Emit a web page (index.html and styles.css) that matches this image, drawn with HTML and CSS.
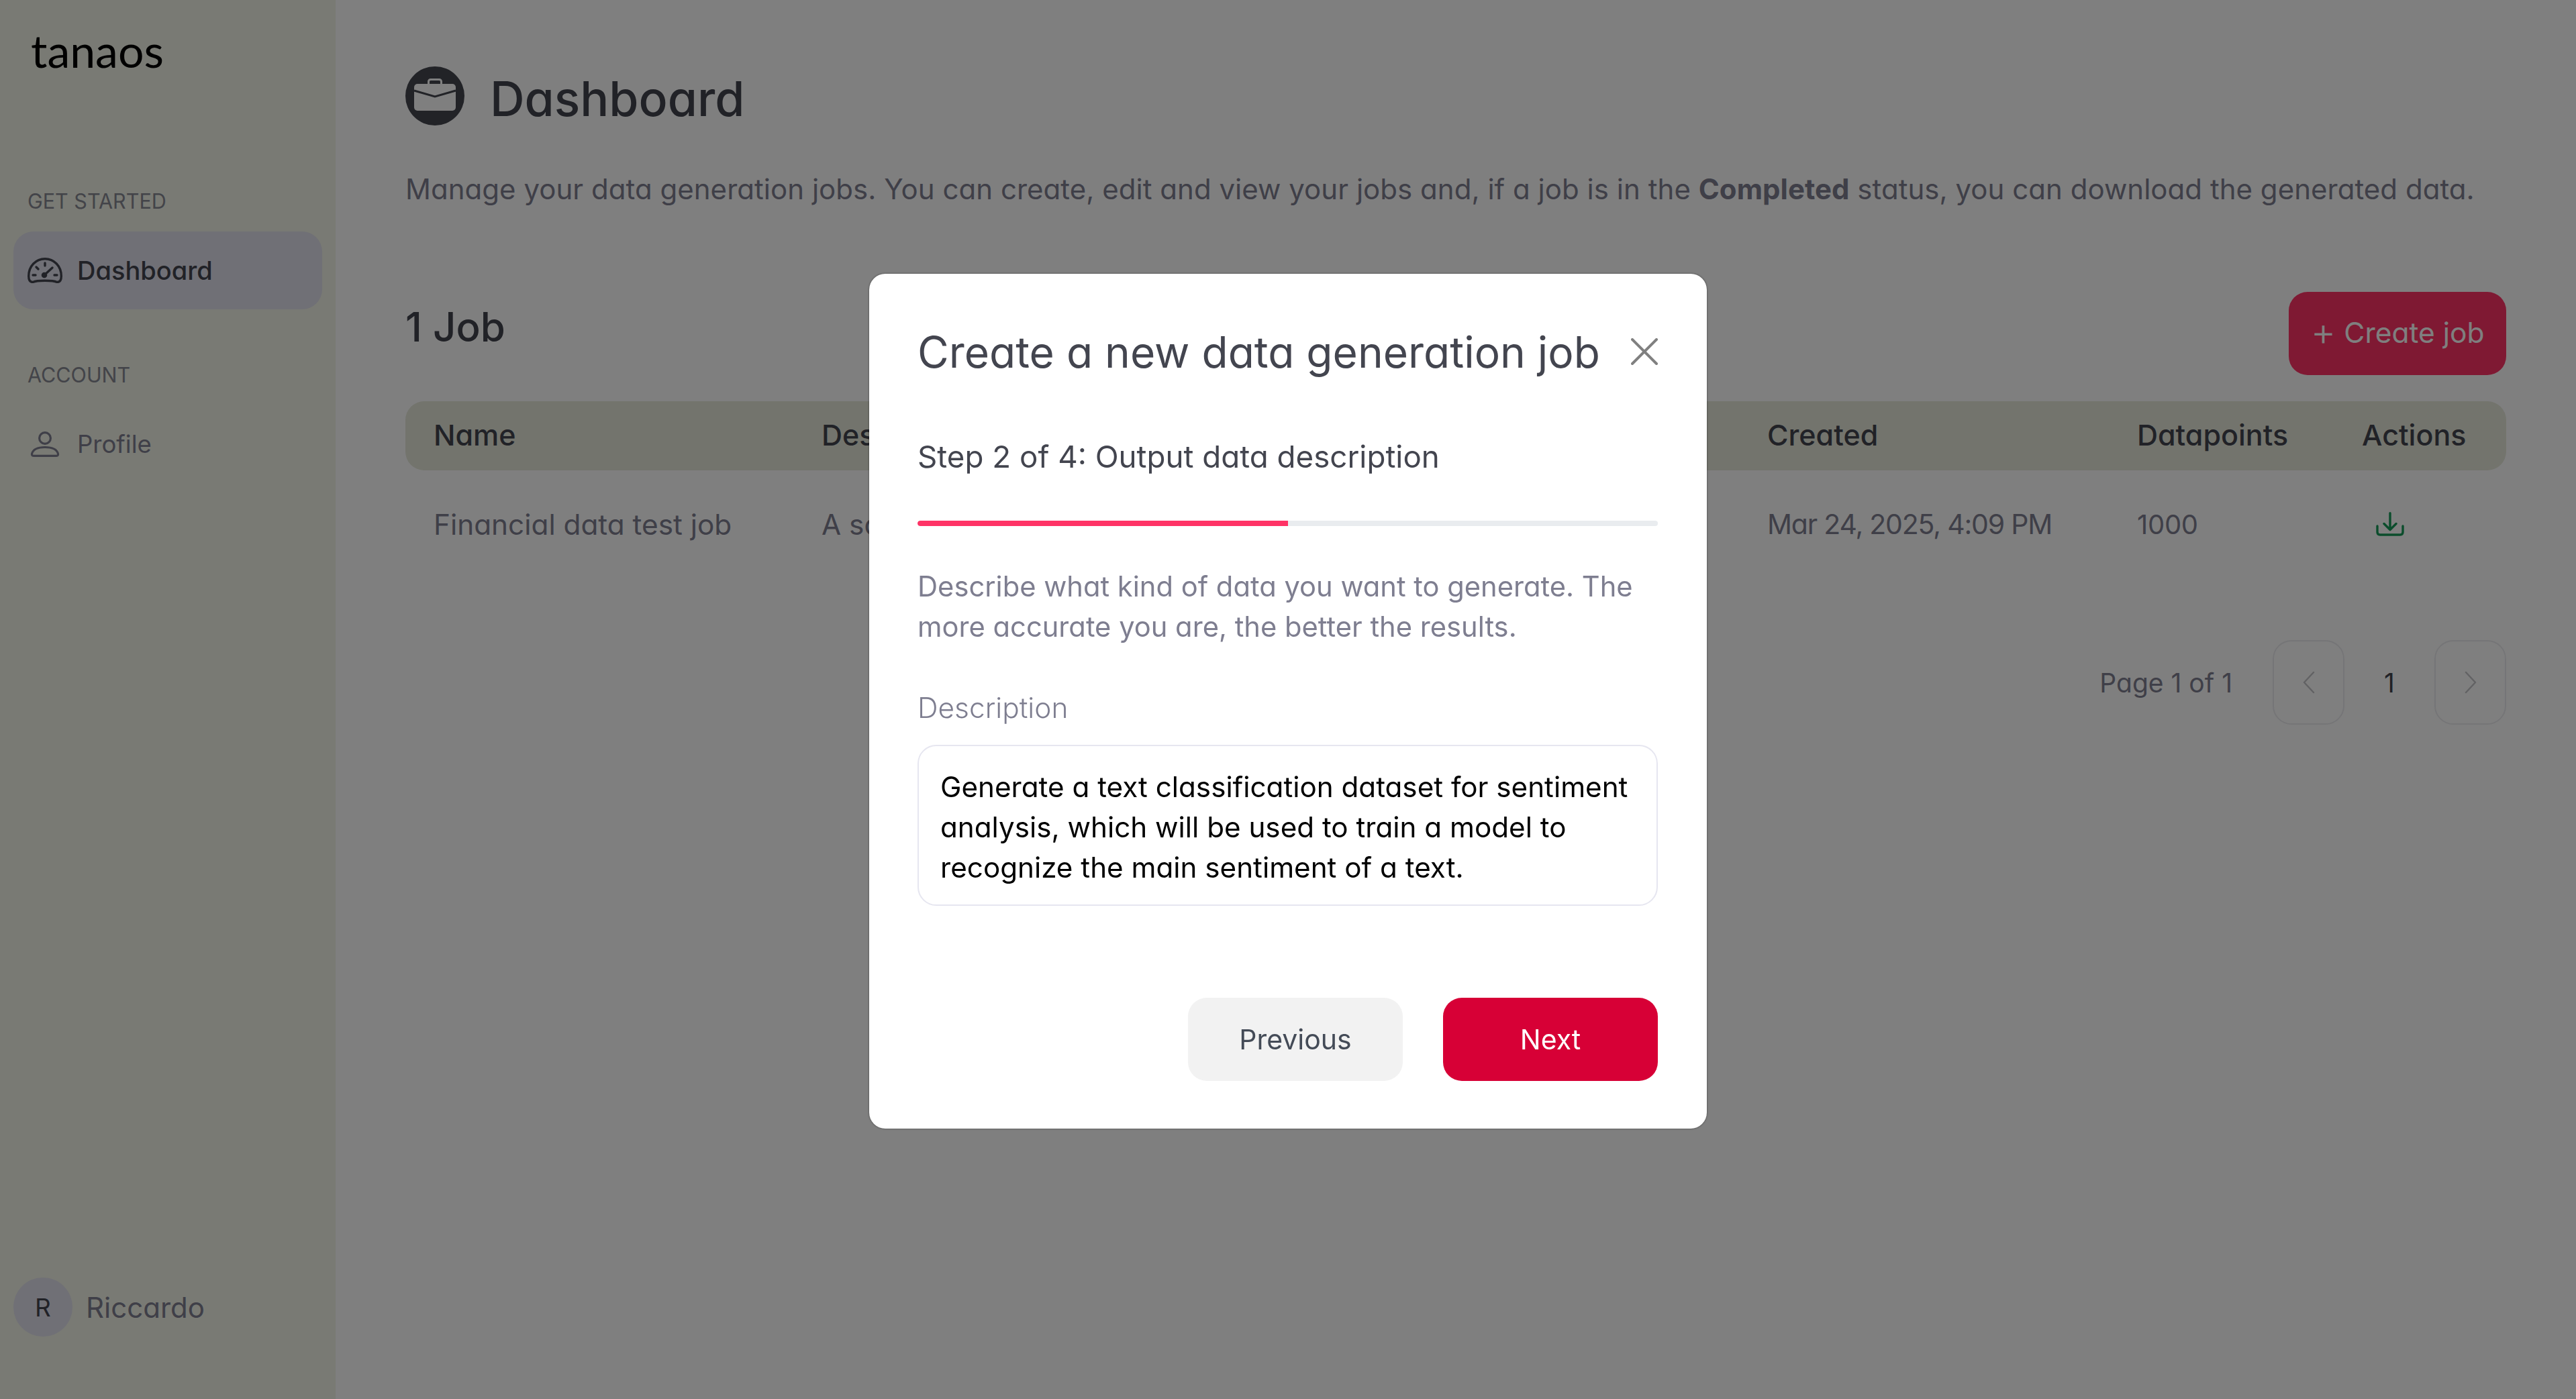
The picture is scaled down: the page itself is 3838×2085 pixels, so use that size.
FILE: index.html
```html
<!DOCTYPE html>
<html lang="en">
<head>
    <meta charset="UTF-8">
    <meta name="viewport" content="width=device-width, initial-scale=1.0">
    <title>Dashboard - tanaos</title>
    <link rel="stylesheet" href="styles.css">
</head>
<body>

<div class="app">
    <aside class="sidebar">
        <div class="logo">tanaos</div>

        <div class="nav-title nav-title-first">GET STARTED</div>
        <a class="nav-item active">
            <svg class="nav-icon" width="52" height="38" viewBox="0 0 52 38" fill="none" stroke="currentColor" stroke-width="3.4" stroke-linecap="round" stroke-linejoin="round">
                <path d="M8 36.5C3.5 36.5 1.7 33 1.7 27.5 1.7 12.5 12.5 1.7 26 1.7S50.3 12.5 50.3 27.5C50.3 33 48.500 36.5 44 36.500 38 33.500 14 33.500 8 36.500Z"/>
                <path d="M26 8v4M13 14l3 3M8 26h4M40 26h4"/>
                <path d="M25 26l12-11" stroke-width="3.4"/>
                <circle cx="25" cy="26" r="2.600" fill="currentColor"/>
            </svg>
            <span>Dashboard</span>
        </a>

        <div class="nav-title">ACCOUNT</div>
        <a class="nav-item">
            <svg class="nav-icon" width="52" height="38" viewBox="0 0 52 38" fill="none" stroke="currentColor" stroke-width="3.2" stroke-linecap="round" stroke-linejoin="round">
                <circle cx="26" cy="10" r="8.400"/>
                <path d="M9 36.400c-2.500 0-2.800-2-2.400-3.500C8.500 26.500 16 23.500 26 23.500s17.500 3 19.400 9.400c.4 1.500.1 3.500-2.400 3.500Z"/>
            </svg>
            <span>Profile</span>
        </a>

        <div class="user">
            <div class="avatar">R</div>
            <span>Riccardo</span>
        </div>
    </aside>

    <main class="content">
        <div class="page-head">
            <svg width="88" height="88" viewBox="0 0 88 88">
                <circle cx="44" cy="44" r="44" fill="#44464f"/>
                <rect x="13" y="26" width="62" height="40" rx="5" fill="#fff"/>
                <rect x="34.500" y="19.500" width="19" height="9" rx="3" fill="none" stroke="#fff" stroke-width="3"/>
                <path d="M13 36l31 9 31-9" fill="none" stroke="#44464f" stroke-width="3"/>
            </svg>
            <h1>Dashboard</h1>
        </div>
        <p class="intro">Manage your data generation jobs. You can create, edit and view your jobs and, if a job is in the <b>Completed</b> status, you can download the generated data.</p>

        <div class="jobs-head">
            <h2>1 Job</h2>
            <button class="create-btn"><span class="plus">+</span> Create job</button>
        </div>

        <div class="table">
            <div class="table-row table-header">
                <span>Name</span>
                <span>Description</span>
                <span>Created</span>
                <span>Datapoints</span>
                <span>Actions</span>
            </div>
            <div class="table-row">
                <span class="cell-name">Financial data test job</span>
                <span class="cell-name">A sample dataset of financial news</span>
                <span class="cell-date">Mar 24, 2025, 4:09 PM</span>
                <span class="cell-num">1000</span>
                <span class="action-cell">
                    <svg width="42" height="36" viewBox="0 0 42 36" fill="none" stroke="#169a58" stroke-width="3.400" stroke-linecap="round" stroke-linejoin="round">
                        <path d="M21 1.700v24M12 17.500l9 9 9-9"/>
                        <path d="M2 21v9c0 2.500 1.500 4 4 4h30c2.500 0 4-1.500 4-4v-9"/>
                    </svg>
                </span>
            </div>
        </div>

        <div class="pager">
            <span class="pager-label">Page 1 of 1</span>
            <button class="pager-btn">
                <svg width="22" height="34" viewBox="0 0 22 34" fill="none" stroke="#c4c4c8" stroke-width="2.500" stroke-linecap="round" stroke-linejoin="round"><path d="M18 2L4 17l14 15"/></svg>
            </button>
            <span class="pager-num">1</span>
            <button class="pager-btn">
                <svg width="22" height="34" viewBox="0 0 22 34" fill="none" stroke="#c4c4c8" stroke-width="2.500" stroke-linecap="round" stroke-linejoin="round"><path d="M4 2l14 15L4 32"/></svg>
            </button>
        </div>
    </main>
</div>

<div class="overlay">
    <div class="modal">
        <div class="modal-head">
            <h3>Create a new data generation job</h3>
            <svg width="40" height="40" viewBox="0 0 40 40" fill="none" stroke="#808080" stroke-width="4" stroke-linecap="round"><path d="M2 2l36 36M38 2L2 38"/></svg>
        </div>
        <div class="step">Step 2 of 4: Output data description</div>
        <div class="progress"><div class="progress-fill" style="width: 50%"></div></div>
        <p class="hint">Describe what kind of data you want to generate. The more accurate you are, the better the results.</p>
        <label class="field-label">Description</label>
        <div class="field">Generate a text classification dataset for sentiment analysis, which will be used to train a model to recognize the main sentiment of a text.</div>
        <div class="modal-actions">
            <button class="btn btn-light">Previous</button>
            <button class="btn btn-primary">Next</button>
        </div>
    </div>
</div>

</body>
</html>
```

FILE: styles.css
```css
* {
    box-sizing: border-box;
}

html, body {
    height: 100%;
}

body {
    margin: 0;
    overflow: hidden;
    background-color: #fff;
    color: #43454f;
    font-family: "Inter", "Noto Sans", sans-serif;
    font-feature-settings: "cv11";
    font-size: 39px;
}

button {
    font: inherit;
    font-feature-settings: inherit;
    border: none;
    cursor: pointer;
}

h1, h2, h3, p {
    margin: 0;
    font-weight: inherit;
}

.app {
    display: flex;
    height: 100vh;
}

/* sidebar */
.sidebar {
    width: 500px;
    flex-shrink: 0;
    display: flex;
    flex-direction: column;
    padding: 0 20px;
    background-color: #f2f4e8;
}

.logo {
    margin-top: 36px;
    padding-left: 26px;
    height: 78px;
    font-family: "Lato", sans-serif;
    font-feature-settings: normal;
    font-size: 68px;
    line-height: 78px;
    color: #000;
}

.nav-title {
    margin: 72px 0 0 21px;
    height: 52px;
    font-size: 30.500px;
    line-height: 52px;
    color: #868892;
}

.nav-title-first {
    margin-top: 160px;
}

.nav-item {
    display: flex;
    align-items: center;
    gap: 22px;
    height: 116px;
    margin-top: 19px;
    padding-left: 21px;
    border-radius: 30px;
    font-size: 36.500px;
    color: #7e7e90;
}

.nav-item.active {
    background-color: #e0e0ec;
    color: #43454f;
    font-size: 38px;
    font-weight: 500;
}

.user {
    display: flex;
    align-items: center;
    gap: 20px;
    margin-top: auto;
    margin-bottom: 93px;
    font-size: 42px;
    color: #7e7e90;
}

.avatar {
    width: 88px;
    height: 88px;
    border-radius: 50%;
    display: flex;
    align-items: center;
    justify-content: center;
    background-color: #e0e0ec;
    color: #43454f;
    font-size: 37px;
}

/* main */
.content {
    flex: 1;
    min-width: 0;
    padding: 99px 104px 0;
}

.page-head {
    display: flex;
    align-items: center;
    gap: 38px;
    height: 88px;
}

.page-head h1 {
    padding-top: 8px;
    font-size: 71.500px;
    font-weight: 500;
}

.intro {
    margin-top: 65px;
    line-height: 60px;
    font-size: 42px;
    letter-spacing: 0.030px;
    color: #7e7e90;
    white-space: nowrap;
}

.intro b {
    font-weight: 700;
}

.jobs-head {
    display: flex;
    align-items: center;
    justify-content: space-between;
    margin-top: 123px;
    height: 124px;
}

.jobs-head h2 {
    margin-bottom: 20px;
    font-size: 60px;
    font-weight: 500;
}

.create-btn {
    width: 324px;
    height: 124px;
    padding-bottom: 4px;
    border-radius: 28px;
    background-color: #ff3366;
    color: #fff;
    font-size: 42.500px;
}

.plus {
    font-size: 58px;
    font-weight: 300;
    line-height: 0;
    vertical-align: -4px;
}

.table {
    margin-top: 39px;
}

.table-row {
    display: grid;
    grid-template-columns: 578px 1409px 551px 335px 1fr;
    align-items: center;
    height: 103px;
    padding-left: 42px;
    padding-bottom: 3px;
    font-size: 42px;
    color: #7e7e90;
    white-space: nowrap;
}

.table-row + .table-row {
    margin-top: 30px;
}

.table-header {
    border-radius: 28px;
    background-color: #e6e8da;
    color: #43454f;
    font-size: 43px;
    font-weight: 500;
}

.cell-name {
    font-size: 42.300px;
}

.cell-date {
    font-size: 41px;
    letter-spacing: -1.200px;
}

.cell-num {
    font-size: 40px;
    letter-spacing: -0.300px;
}

.action-cell {
    padding-left: 21px;
    display: flex;
}

.pager {
    display: flex;
    align-items: center;
    justify-content: flex-end;
    margin-top: 120px;
    font-size: 39px;
    color: #7e7e90;
}

.pager-label {
    margin-right: 60px;
}

.pager-btn {
    width: 107px;
    height: 126px;
    border: 2px solid #ebebee;
    border-radius: 28px;
    background-color: transparent;
    display: flex;
    align-items: center;
    justify-content: center;
}

.pager-num {
    width: 134px;
    text-align: center;
    color: #43454f;
}

/* modal */
.overlay {
    position: fixed;
    inset: 0;
    padding-top: 4px;
    display: flex;
    align-items: center;
    justify-content: center;
    background-color: rgba(0, 0, 0, 0.5);
}

.modal {
    width: 1248px;
    height: 1274px;
    padding: 0 73px 0 72px;
    border-radius: 24px;
    background-color: #fff;
    box-shadow: 0 0 3px rgba(0, 0, 0, 0.5);
}

.modal-head {
    display: flex;
    align-items: center;
    justify-content: space-between;
    padding-top: 78px;
}

.modal-head h3 {
    font-size: 64px;
    white-space: nowrap;
}

.step {
    margin-top: 88px;
    font-size: 45.700px;
    line-height: 60px;
}

.progress {
    height: 8px;
    margin-top: 65px;
    border-radius: 4px;
    background-color: #e9ecef;
    overflow: hidden;
}

.progress-fill {
    height: 100%;
    border-radius: 4px 0 0 4px;
    background-color: #ff3366;
}

.hint {
    margin-top: 60px;
    font-size: 41.700px;
    line-height: 60px;
    color: #7e7e90;
}

.field-label {
    display: block;
    margin-top: 61px;
    font-size: 42.400px;
    line-height: 60px;
    font-weight: 300;
    color: #7e7e90;
}

.field {
    margin-top: 25px;
    height: 240px;
    padding: 31px 32px;
    border: 2px solid #e6e6f0;
    border-radius: 28px;
    font-size: 42.200px;
    line-height: 60px;
    color: #000;
}

.modal-actions {
    display: flex;
    justify-content: flex-end;
    gap: 60px;
    margin-top: 137px;
}

.btn {
    width: 320px;
    height: 124px;
    border-radius: 28px;
    font-size: 41px;
}

.btn-light {
    background-color: #f2f2f2;
    color: #444b57;
}

.btn-primary {
    background-color: #d70036;
    color: #fff;
}
```
